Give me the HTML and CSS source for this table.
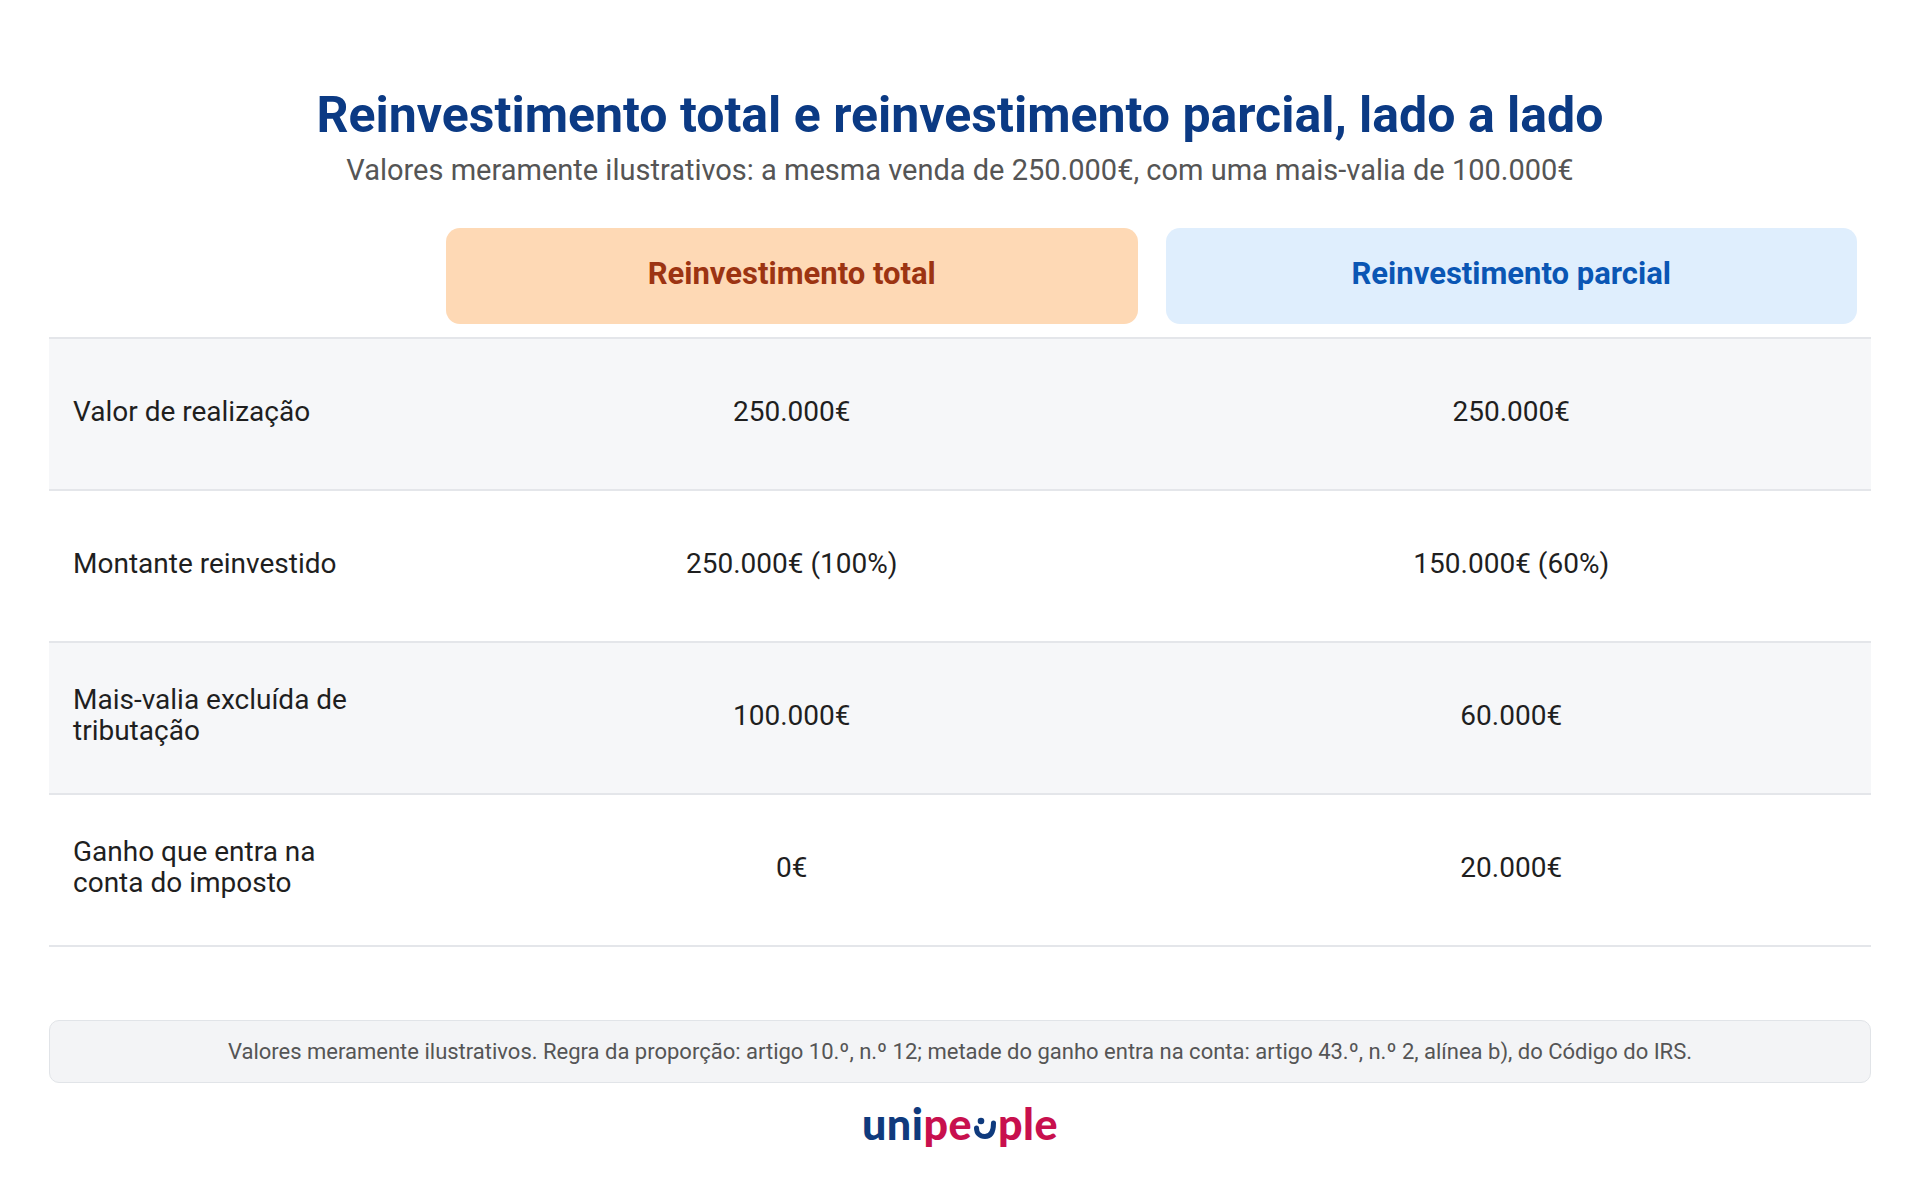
FILE: index.html
```html
<!DOCTYPE html>
<html lang="pt">
<head>
<meta charset="utf-8">
<title>Reinvestimento total e reinvestimento parcial</title>
<link rel="stylesheet" href="styles.css">
</head>
<body>
<main class="page">
  <h1 class="title">Reinvestimento total e reinvestimento parcial, lado a lado</h1>
  <p class="subtitle">Valores meramente ilustrativos: a mesma venda de 250.000€, com uma mais-valia de 100.000€</p>

  <div class="table">
    <div class="row head">
      <div class="cell label"></div>
      <div class="cell pad"><div class="card card-total">Reinvestimento total</div></div>
      <div class="cell pad"><div class="card card-parcial">Reinvestimento parcial</div></div>
    </div>
    <div class="row alt">
      <div class="cell label">Valor de realização</div>
      <div class="cell value">250.000€</div>
      <div class="cell value">250.000€</div>
    </div>
    <div class="row">
      <div class="cell label">Montante reinvestido</div>
      <div class="cell value">250.000€ (100%)</div>
      <div class="cell value">150.000€ (60%)</div>
    </div>
    <div class="row alt">
      <div class="cell label">Mais-valia excluída de tributação</div>
      <div class="cell value">100.000€</div>
      <div class="cell value">60.000€</div>
    </div>
    <div class="row">
      <div class="cell label">Ganho que entra na conta do imposto</div>
      <div class="cell value">0€</div>
      <div class="cell value">20.000€</div>
    </div>
  </div>

  <div class="note">Valores meramente ilustrativos. Regra da proporção: artigo 10.º, n.º 12; metade do ganho entra na conta: artigo 43.º, n.º 2, alínea b), do Código do IRS.</div>

  <div class="logo" aria-label="unipeople">
    <span class="navy">uni</span><span class="red">pe</span><svg class="logo-o" viewBox="0 0 24 26" width="24" height="26" aria-hidden="true"><path d="M3.5 14 C3.5 19.5 7 22.5 12 22.5 C17 22.5 20.5 18.5 20.5 9" fill="none" stroke="#0f3a7d" stroke-width="5" stroke-linecap="round"/><circle cx="8" cy="7" r="3.3" fill="#0f3a7d"/></svg><span class="red">ple</span>
  </div>
</main>
</body>
</html>
```
FILE: styles.css
```css
* { box-sizing: border-box; }

html, body {
  margin: 0;
  background: #ffffff;
}

body {
  font-family: Roboto, "Liberation Sans", Arial, sans-serif;
  color: #1f1f1f;
}

.page {
  width: 1920px;
  height: 1200px;
  padding: 85px 49px 0;
  display: flex;
  flex-direction: column;
}

.title {
  margin: 0;
  text-align: center;
  font-size: 50px;
  line-height: 60px;
  font-weight: 700;
  color: #0b3a84;
}

.subtitle {
  margin: 7px 0 0;
  text-align: center;
  font-size: 29px;
  line-height: 36px;
  color: #555555;
}

.table {
  margin-top: 26px;
  display: flex;
  flex-direction: column;
}

.row {
  display: grid;
  grid-template-columns: 383px 1fr 1fr;
  border-bottom: 2px solid #e4e6ea;
}

.row.head {
  padding: 14px 0 13px;
}

.row.alt {
  background: #f6f7f9;
}

.row:not(.head) {
  height: 152px;
  padding-bottom: 6px;
}

.cell {
  display: flex;
  align-items: center;
}

.cell.pad {
  padding: 0 14px;
}

.cell.label {
  padding: 0 50px 0 24px;
  font-size: 28px;
  line-height: 31px;
  color: #1f1f1f;
}

.cell.value {
  justify-content: center;
  font-size: 28px;
  line-height: 31px;
  color: #1f1f1f;
}

.card {
  width: 100%;
  height: 96px;
  padding-bottom: 5px;
  border-radius: 14px;
  display: flex;
  align-items: center;
  justify-content: center;
  font-size: 31px;
  font-weight: 700;
}

.card-total {
  background: #fed9b5;
  color: #9c3412;
}

.card-parcial {
  background: #dfeefd;
  color: #0a56b4;
}

.note {
  margin-top: 73px;
  height: 63px;
  border: 1.5px solid #e1e4e8;
  border-radius: 10px;
  background: #f3f4f6;
  display: flex;
  align-items: center;
  justify-content: center;
  font-size: 22px;
  color: #555555;
}

.logo {
  margin-top: 16px;
  align-self: center;
  display: flex;
  align-items: baseline;
  font-family: Lato, "Open Sans", sans-serif;
  font-weight: 900;
  font-size: 43px;
  line-height: 50px;
  letter-spacing: 0.5px;
}

.logo .navy { color: #0f3a7d; }
.logo .red { color: #c8104e; }

.logo-o {
  margin: 0 1px;
  align-self: flex-end;
  margin-bottom: 9px;
}
```
